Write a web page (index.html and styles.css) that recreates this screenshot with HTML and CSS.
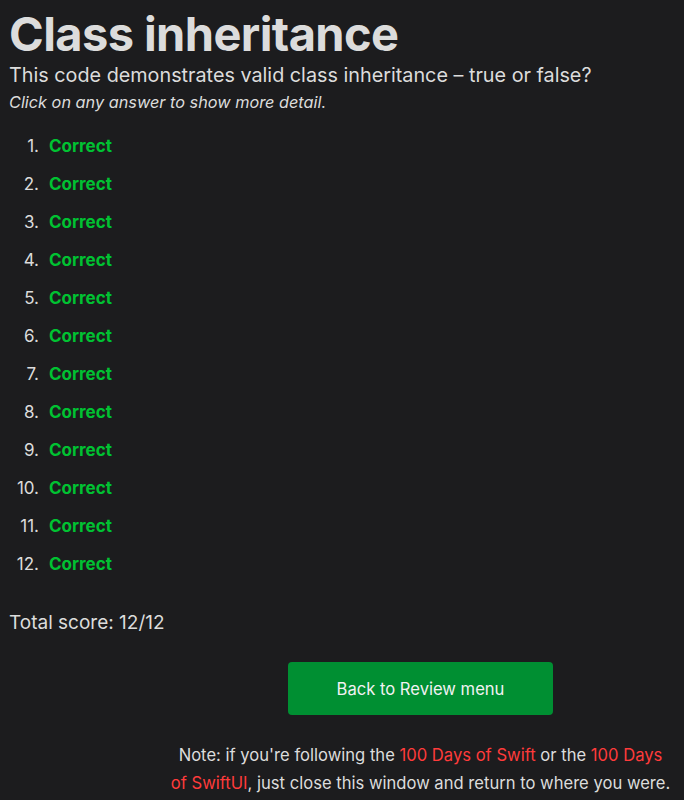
FILE: index.html
```html
<!DOCTYPE html>
<html lang="en">
<head>
<meta charset="utf-8">
<title>Class inheritance</title>
<link rel="stylesheet" href="styles.css">
</head>
<body>
<main class="page">
  <h1 class="title">Class inheritance</h1>
  <p class="question">This code demonstrates valid class inheritance – true or false?</p>
  <p class="hint">Click on any answer to show more detail.</p>
  <ol class="answers">
    <li><span class="correct">Correct</span></li>
    <li><span class="correct">Correct</span></li>
    <li><span class="correct">Correct</span></li>
    <li><span class="correct">Correct</span></li>
    <li><span class="correct">Correct</span></li>
    <li><span class="correct">Correct</span></li>
    <li><span class="correct">Correct</span></li>
    <li><span class="correct">Correct</span></li>
    <li><span class="correct">Correct</span></li>
    <li><span class="correct">Correct</span></li>
    <li><span class="correct">Correct</span></li>
    <li><span class="correct">Correct</span></li>
  </ol>
  <p class="score">Total score: 12/12</p>
  <section class="actions">
    <a class="button" href="#">Back to Review menu</a>
    <p class="note">Note: if you're following the <a href="#">100 Days of Swift</a> or the <a href="#">100 Days of SwiftUI</a>, just close this window and return to where you were.</p>
  </section>
</main>
</body>
</html>
```

FILE: styles.css
```css
html, body {
  margin: 0;
  padding: 0;
  background: #1c1c1e;
}
body {
  font-family: Inter, "Noto Sans", sans-serif;
  color: #dcdcdc;
}
.page {
  padding: 0 8px 0 9px;
}
.title {
  margin: 0;
  padding-top: 6px;
  font-size: 47px;
  font-weight: 700;
  line-height: 56px;
  letter-spacing: -0.6px;
  color: #dcdcdc;
}
.question {
  margin: 0;
  font-size: 19.8px;
  line-height: 26px;
}
.hint {
  margin: 2px 0 0;
  font-size: 16.3px;
  line-height: 24px;
  font-style: italic;
}
.answers {
  margin: 20px 0 0;
  padding: 0;
  list-style: none;
  counter-reset: item;
  font-size: 17px;
  line-height: 24px;
}
.answers li {
  counter-increment: item;
  display: flex;
  margin-bottom: 14px;
  margin-left: -9px;
}
.answers li::before {
  content: counter(item) ".";
  width: 31px;
  margin-left: 8px;
  margin-right: 10px;
  text-align: right;
  font-size: 17px;
  color: #dcdcdc;
}
.correct {
  color: #00c232;
  font-weight: 700;
}
.score {
  margin: 34px 0 0;
  font-size: 19px;
  line-height: 26px;
}
.actions {
  margin: 26px 5px 0 161px;
  display: flex;
  flex-direction: column;
  align-items: center;
}
.button {
  display: flex;
  align-items: center;
  justify-content: center;
  width: 265px;
  height: 53px;
  background: #008f32;
  color: #f2f2f2;
  border-radius: 4px;
  font-size: 16.6px;
  text-decoration: none;
}
.note {
  margin: 26px 0 0;
  text-align: center;
  font-size: 16.6px;
  line-height: 28px;
}
.note a {
  color: #ff3b3b;
  text-decoration: none;
}
```
